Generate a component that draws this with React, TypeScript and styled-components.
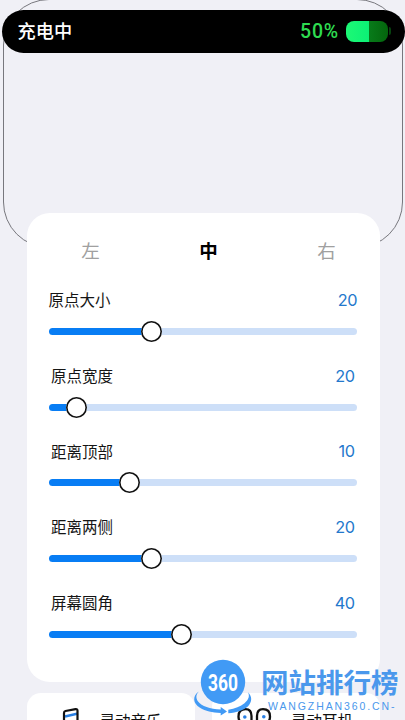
import React from "react";
import styled, { createGlobalStyle } from "styled-components";

const GlobalStyle = createGlobalStyle`
  * { box-sizing: border-box; }
  body {
    margin: 0;
    overflow: hidden;
    background: #f0f0f6;
    font-family: "Noto Sans CJK SC", sans-serif;
  }
`;

const Page = styled.main`
  position: relative;
  width: 405px;
  height: 720px;
  overflow: hidden;
  padding: 9.5px 0 0 1.5px;
  background: #f0f0f6;
`;

const ScreenOutline = styled.div`
  position: absolute;
  left: 3px;
  top: -1px;
  width: 400px;
  height: 249px;
  border: 1px solid #77777d;
  border-radius: 46px;
`;

const Island = styled.header`
  position: relative;
  display: flex;
  align-items: center;
  width: 403px;
  height: 43.5px;
  padding: 0 13.5px 0 16px;
  border-radius: 22px;
  background: #000;
`;

const ChargeState = styled.span`
  flex: 1;
  margin-top: -3px;
  color: #fff;
  font-size: 18.2px;
  font-weight: 500;
  line-height: 24px;
`;

const Percent = styled.span`
  margin: 2px 7px 0 0;
  color: #2edb50;
  font: 500 19.5px/24px Roboto, sans-serif;
  letter-spacing: 0.8px;
`;

const Battery = styled.div`
  width: 42px;
  height: 21px;
  border-radius: 8px;
  background: linear-gradient(90deg, #1df875 0, #0cf176 23px, #087b1a 23px, #04660d 100%);
`;

const BatteryTip = styled.div`
  width: 2px;
  height: 8px;
  margin-left: 1px;
  border-radius: 0 2px 2px 0;
  background: #07430f;
`;

const Panel = styled.section`
  position: relative;
  width: 353.5px;
  height: 469px;
  margin: 159.5px 0 0 25px;
  padding: 24px 23px 0 22px;
  border-radius: 23px;
  background: #fff;
`;

const Tabs = styled.nav`
  display: grid;
  grid-template-columns: 84px 152px 84px;
  justify-content: start;
  height: 27px;
`;

const Tab = styled.button<{ $active?: boolean }>`
  padding: 0;
  border: 0;
  background: none;
  color: ${(p) => (p.$active ? "#000" : "#a0a0a0")};
  font: ${(p) => (p.$active ? 700 : 400)} 18.5px/27px "Noto Sans CJK SC", sans-serif;
`;

const Settings = styled.div`
  padding-top: 24.4px;
`;

const Setting = styled.div`
  height: 75.7px;
`;

const SettingHead = styled.div<{ $inset: number }>`
  display: flex;
  justify-content: space-between;
  align-items: center;
  height: 24px;
  padding: 0 ${(p) => p.$inset}px;
`;

const Label = styled.span`
  margin-top: -1.4px;
  color: #151515;
  font-size: 15.5px;
  line-height: 24px;
`;

const Value = styled.span`
  color: #2478cc;
  font: 400 16.3px/24px Inter, sans-serif;
  letter-spacing: -0.5px;
`;

const Slider = styled.div`
  display: flex;
  align-items: center;
  height: 22px;
  margin-top: 8.5px;
`;

const Filled = styled.div<{ $width: number }>`
  width: ${(p) => p.$width}px;
  height: 7px;
  border-radius: 4px 0 0 4px;
  background: #087df4;
`;

const Remaining = styled.div`
  flex: 1;
  height: 7px;
  border-radius: 0 4px 4px 0;
  background: #cddff8;
`;

const Knob = styled.div`
  width: 21px;
  height: 21px;
  margin: 0 -1px;
  z-index: 1;
  border-radius: 50%;
  background: #fff;
  box-shadow: inset 0 0 0 1.6px #111;
`;

const Features = styled.section`
  display: grid;
  grid-template-columns: 168px 168px;
  gap: 17.5px;
  width: 353.5px;
  margin: 11px 0 0 25px;
`;

const Feature = styled.article<{ $icon: number }>`
  display: grid;
  grid-template-columns: ${(p) => p.$icon}px 1fr;
  align-items: start;
  height: 65px;
  padding: 14px 0 0 25px;
  border-radius: 14px;
  background: #fff;

  svg { display: block; }
`;

const FeatureName = styled.span`
  color: #111;
  font-size: 15.5px;
  line-height: 27px;
`;

const Watermark = styled.aside`
  position: absolute;
  left: 191px;
  top: 655px;
  display: flex;
  width: 214px;
  color: #4a98ec;

  svg { display: block; flex: none; overflow: visible; }
`;

const WatermarkText = styled.div`
  display: flex;
  flex-direction: column;
  margin-left: 10px;
`;

const SiteName = styled.strong`
  margin-top: 9px;
  font-size: 27.5px;
  font-weight: 700;
  line-height: 34px;
  white-space: nowrap;
`;

const SiteUrl = styled.span`
  margin: 2px 0 0 7px;
  font: 400 10.5px/12px "Liberation Sans", sans-serif;
  letter-spacing: 1.9px;
  white-space: nowrap;
`;

const settings = [
  { label: "原点大小", value: 20, fill: 93.5, inset: 0 },
  { label: "原点宽度", value: 20, fill: 18.5, inset: 2.5 },
  { label: "距离顶部", value: 10, fill: 71, inset: 2.5 },
  { label: "距离两侧", value: 20, fill: 93.5, inset: 2.5 },
  { label: "屏幕圆角", value: 40, fill: 123, inset: 2.5 },
];

function MusicIcon() {
  return (
    <svg width="36" height="34" viewBox="0 0 36 34" fill="none">
      <path d="m13 9.500 13-3" stroke="#287fe3" strokeWidth="2.4" />
      <path d="M12 25V6q0-1.600 1.500-2l10-1.800q2-.3 2 1.500v20" stroke="#111" strokeWidth="2.2" />
      <circle cx="8" cy="27" r="4" stroke="#111" strokeWidth="2" />
      <circle cx="21.500" cy="25" r="4" stroke="#111" strokeWidth="2" />
    </svg>
  );
}

function EarbudsIcon() {
  return (
    <svg width="35" height="34" viewBox="0 0 35 34" fill="none">
      <path d="M10 31V17C4 17 1.500 14 1.500 9.500S4 2.200 8.500 2.200s6 2.800 6 6.800v22Zm15 0V17c6 0 8-3 8-7.500s-2.500-7.300-7-7.300-6 2.800-6 6.800v22Z" stroke="#111" strokeWidth="2.3" />
      <circle cx="7.800" cy="10" r="1.800" fill="#287fe3" />
      <circle cx="26.800" cy="9.800" r="1.800" fill="#287fe3" />
    </svg>
  );
}

function SiteLogo() {
  return (
    <svg width="60" height="65" viewBox="0 0 60 65">
      <circle cx="32" cy="27" r="22.200" fill="#419af5" />
      <text transform="translate(32 35.6) scale(.71 1)" textAnchor="middle" fill="#fff" fontFamily="Roboto" fontSize="24.5" fontWeight="700">360</text>
      <path d="M7.800 36.500C1.200 41 1.800 48.500 9 52.800c5.500 3.400 12 5 20.700 5.200v2.500l6.300-3.900-6.300-4.600v2.500C19 54.300 10.500 51 7.300 46.800 4.500 43 5 39.500 7.800 36.500Z" fill="#419af5" />
      <path d="M56.800 37.300c2.200 3.300 1 7.400-3.300 10.900-4 3.300-9.500 5.400-16.200 6.500v3.600c8.500-.8 15.500-3 19.500-6.800 4.600-4.600 4.500-10.400 0-14.200Z" fill="#419af5" />
    </svg>
  );
}

export default function App() {
  return (
    <>
      <GlobalStyle />
      <Page>
        <ScreenOutline />
        <Island>
          <ChargeState>充电中</ChargeState>
          <Percent>50%</Percent>
          <Battery />
          <BatteryTip />
        </Island>
        <Panel>
          <Tabs>
            <Tab>左</Tab>
            <Tab $active>中</Tab>
            <Tab>右</Tab>
          </Tabs>
          <Settings>
            {settings.map((item) => (
              <Setting key={item.label}>
                <SettingHead $inset={item.inset}>
                  <Label>{item.label}</Label>
                  <Value>{item.value}</Value>
                </SettingHead>
                <Slider>
                  <Filled $width={item.fill} />
                  <Knob />
                  <Remaining />
                </Slider>
              </Setting>
            ))}
          </Settings>
        </Panel>
        <Features>
          <Feature $icon={48}>
            <MusicIcon />
            <FeatureName>灵动音乐</FeatureName>
          </Feature>
          <Feature $icon={54}>
            <EarbudsIcon />
            <FeatureName>灵动耳机</FeatureName>
          </Feature>
        </Features>
        <Watermark>
          <SiteLogo />
          <WatermarkText>
            <SiteName>网站排行榜</SiteName>
            <SiteUrl>WANGZHAN360.CN-</SiteUrl>
          </WatermarkText>
        </Watermark>
      </Page>
    </>
  );
}
